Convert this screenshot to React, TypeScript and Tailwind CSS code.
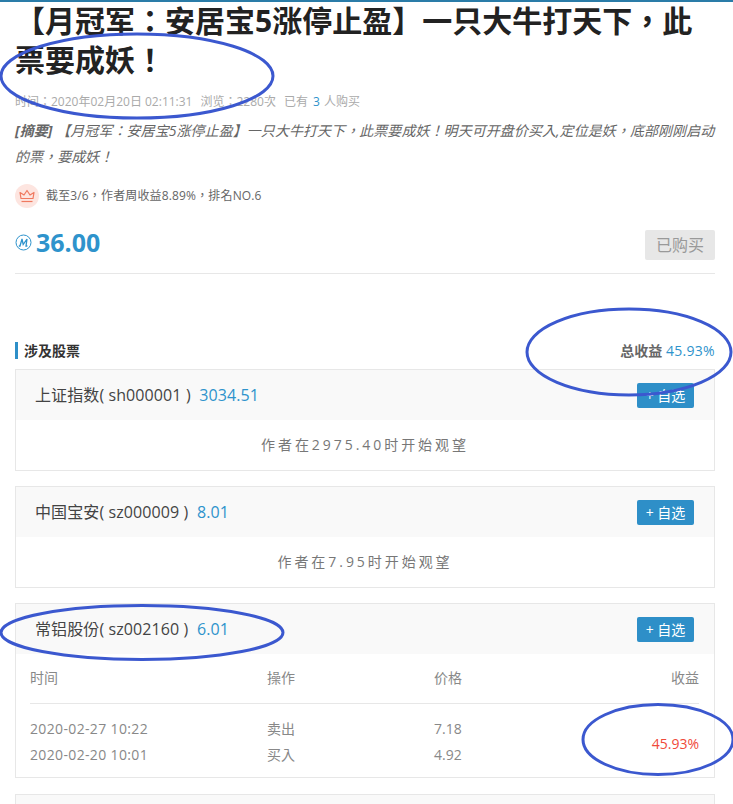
import React from "react";

const font = "font-['Open_Sans','Noto_Sans_CJK_TC',sans-serif]";

// hand-drawn marker ellipses that sit on top of the page
const Ring = ({ className, rx, ry }: { className: string; rx: number; ry: number }) => (
  <svg
    className={`absolute pointer-events-none ${className}`}
    viewBox={`0 0 ${rx * 2 + 4} ${ry * 2 + 4}`}
    fill="none"
  >
    <ellipse cx={rx + 2} cy={ry + 2} rx={rx} ry={ry} stroke="#3b58cf" strokeWidth="3" />
  </svg>
);

const StockHeader = ({ name, code, price }: { name: string; code: string; price: string }) => (
  <div className="h-[50px] bg-[#f9f9f9] flex items-center justify-between pl-[19px] pr-[20px]">
    <div className="text-[16px] text-[#444] whitespace-pre tracking-[0.1px]">
      {name}( {code} )  <span className="text-[#2e93cc]">{price}</span>
    </div>
    <button className="w-[57px] h-[25px] bg-[#2e8fc8] text-white text-[14px] rounded-[2px]">+ 自选</button>
  </div>
);

const WatchCard = (props: { name: string; code: string; price: string; note: string }) => (
  <div className="border border-[#e7e7e7] mb-[15px]">
    <StockHeader name={props.name} code={props.code} price={props.price} />
    <div className="h-[50px] pb-[2px] flex items-center justify-center text-[14px] tracking-[2.95px] text-[#777]">
      {props.note}
    </div>
  </div>
);

export default function App() {
  return (
    <div className={`relative h-[804px] w-[733px] overflow-hidden bg-white border-t-2 border-[#2a7ca8] ${font}`}>
      <div className="ml-[15px] w-[700px]">
        <h1 className="text-[30px] leading-[39px] font-bold text-[#222] -mt-px">
          【月冠军：安居宝5涨停止盈】一只大牛打天下，此票要成妖！
        </h1>
        <div className="mt-[14px] text-[12px] leading-[18px] text-[#aaa] flex gap-[8px]">
          <span>时间：2020年02月20日 02:11:31</span>
          <span>浏览：2280次</span>
          <span>
            已有 <span className="ml-[2px] mr-px text-[#2e93cc]">3</span> 人购买
          </span>
        </div>
        <p className="mt-[7px] text-[14px] leading-[26px] italic text-[#666] tracking-[0.06px]">
          <b>[摘要]</b> 【月冠军：安居宝5涨停止盈】一只大牛打天下，此票要成妖！明天可开盘价买入,定位是妖，底部刚刚启动的票，要成妖！
        </p>
        <div className="mt-[14px] flex items-center gap-[7px] text-[12px] tracking-[0.15px] text-[#666]">
          <div className="w-6 h-6 rounded-full bg-[#fde5e0] flex items-center justify-center">
            <svg width="16" height="14" viewBox="0 0 16 14" fill="none" stroke="#f0795f" strokeWidth="1.2">
              <path d="M2 9.5 L1 3.5 L5 6 L8 1.5 L11 6 L15 3.5 L14 9.5 Z" strokeLinejoin="round" />
              <path d="M2.5 12.5 H13.5" />
            </svg>
          </div>
          <span>截至3/6，作者周收益8.89%，排名NO.6</span>
        </div>
        <div className="mt-[19px] pb-[13px] border-b border-[#e7e7e7] flex items-start justify-between">
          <div className="flex items-center gap-[4px] text-[#2e93cc] -mt-px pb-px">
            <svg width="17" height="17" viewBox="0 0 17 17" fill="none" stroke="currentColor">
              <circle cx="8.5" cy="8.5" r="7.5" />
              <path d="M3.8 12 H5 L7 5 L8.2 10.5 L12 5 L11 12 H12.4" strokeWidth="1.3" />
            </svg>
            <span className="text-[25px] leading-[32px] font-bold">36.00</span>
          </div>
          <button className="mt-[3px] w-[70px] h-[30px] bg-[#e7e7e7] text-[#999] text-[16px] rounded-[2px]">已购买</button>
        </div>

        <div className="mt-[68px] h-[19px] pb-[2px] flex items-center justify-between">
          <div className="border-l-[3px] border-[#2e8fc8] pl-[6px] text-[14px] font-bold text-[#333] leading-[17px]">涉及股票</div>
          <div className="text-[14px] text-[#666]">
            <b>总收益</b> <span className="text-[#2e93cc] tracking-[0.3px]">45.93%</span>
          </div>
        </div>

        <div className="mt-[8px]">
          <WatchCard name="上证指数" code="sh000001" price="3034.51" note="作者在2975.40时开始观望" />
          <WatchCard name="中国宝安" code="sz000009" price="8.01" note="作者在7.95时开始观望" />

          <div className="border border-[#e7e7e7] mb-[16px]">
            <StockHeader name="常铝股份" code="sz002160" price="6.01" />
            <div className="pl-[14px] pr-[15px] text-[14px] text-[#888]">
              <div className="h-[50px] pb-[2px] grid grid-cols-[237px_167px_1fr_auto] items-center border-b border-[#e7e7e7]">
                <span>时间</span>
                <span>操作</span>
                <span>价格</span>
                <span className="text-right">收益</span>
              </div>
              <div className="h-[73px] grid grid-cols-[237px_167px_1fr_auto] items-center pt-[3px]">
                <div className="leading-[26px] tracking-[0.35px]">
                  <div>2020-02-27 10:22</div>
                  <div>2020-02-20 10:01</div>
                </div>
                <div className="leading-[26px]">
                  <div>卖出</div>
                  <div>买入</div>
                </div>
                <div className="leading-[26px]">
                  <div>7.18</div>
                  <div>4.92</div>
                </div>
                <div className="text-[#f04a3a] mt-[2px]">45.93%</div>
              </div>
            </div>
          </div>

          <div className="border border-[#e7e7e7] h-[50px] bg-[#f9f9f9]" />
        </div>
      </div>

      <Ring className="left-[-1px] top-[30px] w-[276px] h-[88px]" rx={136} ry={42} />
      <Ring className="left-[525px] top-[305px] w-[208px] h-[90px]" rx={102} ry={43} />
      <Ring className="left-[-1px] top-[601px] w-[286px] h-[59px]" rx={141} ry={27} />
      <Ring className="left-[581px] top-[700px] w-[154px] h-[75px]" rx={75} ry={35} />
    </div>
  );
}
